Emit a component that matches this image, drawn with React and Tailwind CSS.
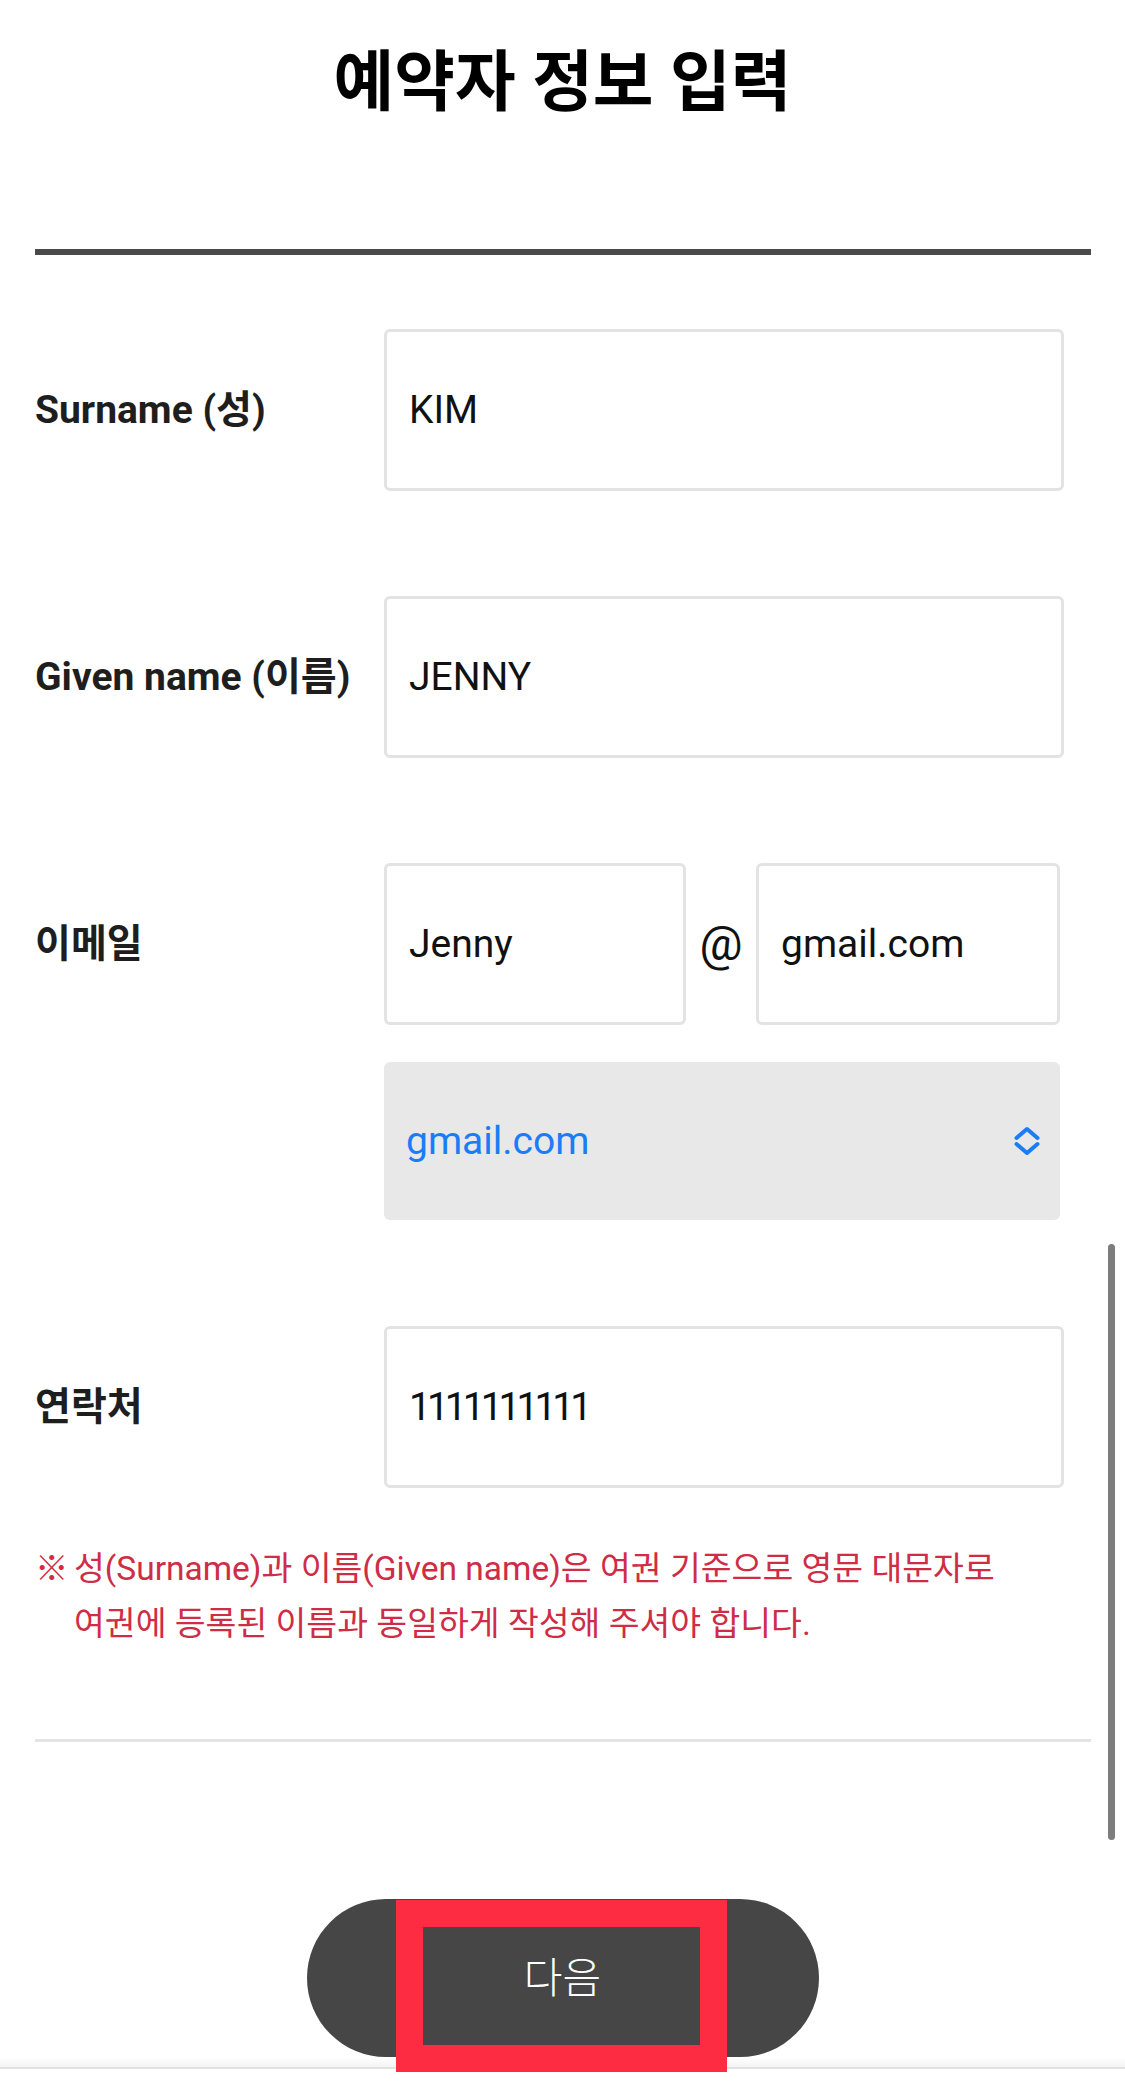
import { useState } from "react";

const FONT = {
  fontFamily: 'Roboto, "Noto Sans CJK KR", "Noto Sans", sans-serif',
};

function TextBox({ value, className = "" }) {
  return (
    <div
      className={
        "flex h-[162px] items-center rounded-[6px] border-[3px] border-[#e3e3e3] bg-white pl-[22px] text-[39px] text-[#111] " +
        className
      }
    >
      {value}
    </div>
  );
}

function FieldRow({ label, children, className = "" }) {
  return (
    <div className={"flex items-center " + className}>
      <div className="w-[349px] shrink-0 text-[39px] font-bold text-[#1e1e1e]">
        {label}
      </div>
      <div className="w-[680px]">{children}</div>
    </div>
  );
}

function UpDownIcon() {
  return (
    <svg width="28" height="30" viewBox="0 0 28 30" fill="none">
      <path
        d="M3.5 12 L14 3 L24.5 12"
        stroke="#1a7df6"
        strokeWidth="4"
        strokeLinecap="round"
        strokeLinejoin="round"
      />
      <path
        d="M3.5 18 L14 27 L24.5 18"
        stroke="#1a7df6"
        strokeWidth="4"
        strokeLinecap="round"
        strokeLinejoin="round"
      />
    </svg>
  );
}

export default function App() {
  const [form] = useState({
    surname: "KIM",
    given: "JENNY",
    emailId: "Jenny",
    domain: "gmail.com",
    phone: "1111111111",
  });

  return (
    <div className="relative h-[2090px] w-full overflow-hidden bg-white" style={FONT}>
      {/* TITLE */}
      <h1 className="pt-[43px] text-center text-[66px] font-bold leading-[80px] text-black">
        예약자 정보 입력
      </h1>

      <main className="pl-[35px] pr-[34px]">
        <div className="mt-[126px] h-[6px] bg-[#4a4a4a]" />

        {/* FORM */}
        <FieldRow label="Surname (성)" className="mt-[74px]">
          <TextBox value={form.surname} />
        </FieldRow>

        <FieldRow label="Given name (이름)" className="mt-[105px]">
          <TextBox value={form.given} />
        </FieldRow>

        <FieldRow label="이메일" className="mt-[105px]">
          <div className="flex w-[676px] items-center">
            <TextBox value={form.emailId} className="w-[302px]" />
            <span className="w-[70px] text-center text-[48px] leading-none text-[#111]">@</span>
            <TextBox value={form.domain} className="w-[304px]" />
          </div>
        </FieldRow>

        <div className="mt-[37px] flex">
          <div className="w-[349px] shrink-0" />
          <div className="flex h-[158px] w-[676px] items-center justify-between rounded-[6px] bg-[#e8e8e8] pl-[22px] pr-[19px] text-[39px] text-[#1a7df6]">
            <span>{form.domain}</span>
            <UpDownIcon />
          </div>
        </div>

        <FieldRow label="연락처" className="mt-[106px]">
          <TextBox value={form.phone} className="tracking-[-4px]" />
        </FieldRow>

        {/* NOTE */}
        <div className="mt-[53px] flex text-[33.5px] leading-[55px] text-[#cf2c46]">
          <span className="w-[39px] shrink-0">※</span>
          <p className="whitespace-nowrap">
            성(Surname)과 이름(Given name)은 여권 기준으로 영문 대문자로
            <br />
            여권에 등록된 이름과 동일하게 작성해 주셔야 합니다.
          </p>
        </div>

        <div className="mt-[88px] h-[3px] bg-[#e4e4e4]" />
      </main>

      {/* BUTTON */}
      <div className="mt-[157px] flex justify-center">
        <button className="flex h-[158px] w-[512px] items-center justify-center rounded-full bg-[#464646] text-[42px] font-light text-white">
          다음
        </button>
      </div>

      <div className="h-[10px] bg-gradient-to-b from-white to-[#f4f4f4]" />
      <div className="h-[2px] bg-[#e3e3e3]" />

      {/* overlays */}
      <div className="absolute left-[396px] top-[1900px] h-[172px] w-[331px] border-[27px] border-[#fe2c43]" />
      <div className="absolute left-[1108px] top-[1244px] h-[596px] w-[7px] rounded-full bg-[#7d7d7d]" />
    </div>
  );
}
